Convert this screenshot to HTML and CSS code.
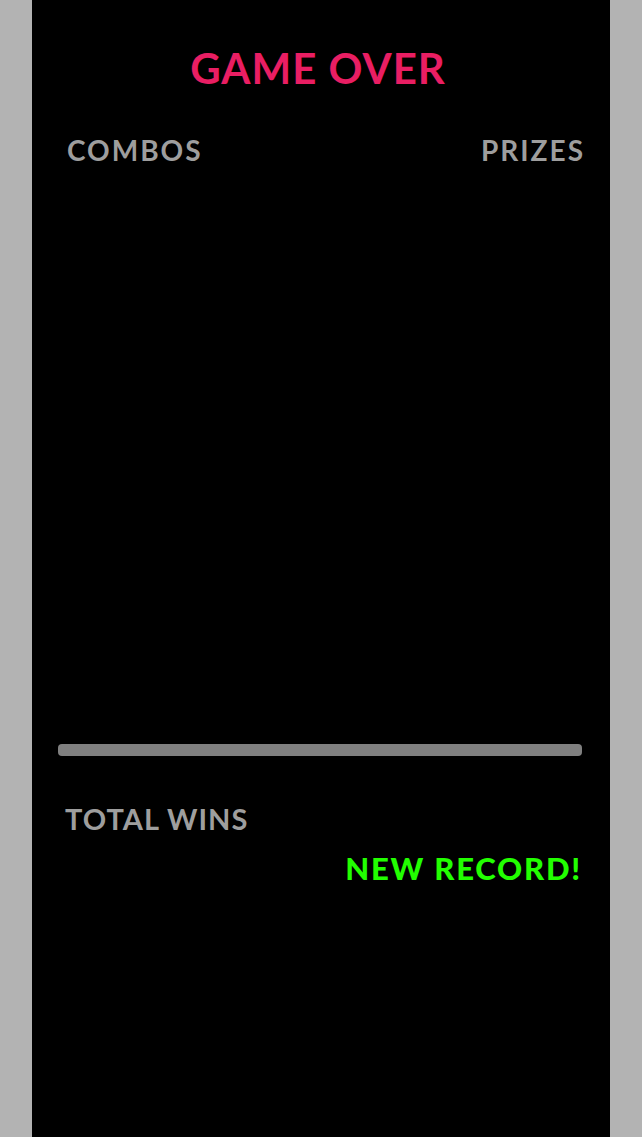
FILE: index.html
```html
<!DOCTYPE html>
<html>
<head>
<meta charset="utf-8">
<link rel="stylesheet" href="styles.css">
</head>
<body>
<div class="screen">
  <h1 class="title">GAME OVER</h1>
  <div class="columns">
    <span class="col-label">COMBOS</span>
    <span class="col-label">PRIZES</span>
  </div>
  <div class="list"></div>
  <div class="bar"></div>
  <div class="totals">
    <div class="total-label">TOTAL WINS</div>
    <div class="record">NEW RECORD!</div>
  </div>
</div>
</body>
</html>
```

FILE: styles.css
```css
html, body {
  margin: 0;
  padding: 0;
  background: #b3b3b3;
  height: 100%;
}
body {
  font-family: Lato, "Open Sans", sans-serif;
}
.screen {
  width: 578px;
  min-height: 1137px;
  margin: 0 auto;
  background: #000;
  display: flex;
  flex-direction: column;
}
.title {
  margin: 0;
  padding: 44px 6px 0 0;
  text-align: center;
  color: #e91e63;
  font-size: 42px;
  font-weight: 700;
  line-height: 48px;
  letter-spacing: 1px;
}
.columns {
  display: flex;
  justify-content: space-between;
  padding: 0 25px 0 35px;
  margin-top: 42px;
}
.col-label {
  color: #9e9e9e;
  font-size: 28px;
  font-weight: 700;
  line-height: 32px;
  letter-spacing: 2px;
}
.list {
  height: 578px;
}
.bar {
  height: 12px;
  margin: 0 28px 0 26px;
  background: #808080;
  border-radius: 4px;
}
.totals {
  padding: 46px 28px 0 33px;
  display: flex;
  flex-direction: column;
}
.total-label {
  color: #9e9e9e;
  font-size: 29px;
  font-weight: 700;
  line-height: 34px;
  letter-spacing: 1px;
}
.record {
  align-self: flex-end;
  color: #22ff00;
  font-size: 31px;
  font-weight: 900;
  line-height: 36px;
  margin-top: 14px;
  letter-spacing: 1.8px;
}
```
